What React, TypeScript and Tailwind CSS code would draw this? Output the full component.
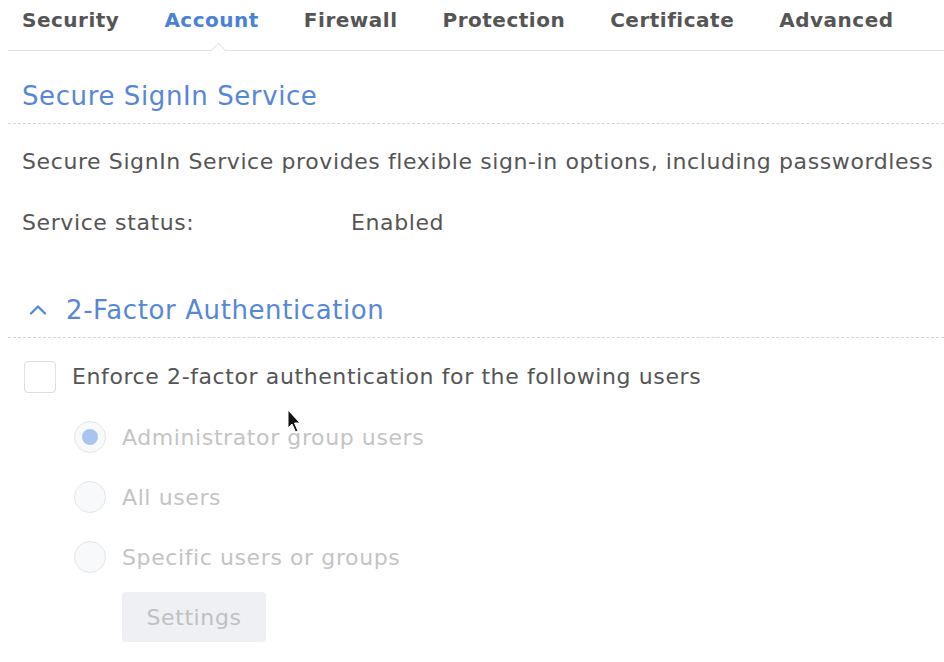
import { ChevronUp } from "lucide-react";

const tabs = ["Security", "Account", "Firewall", "Protection", "Certificate", "Advanced"];

const Radio = ({ checked, label }: { checked?: boolean; label: string }) => (
  <div className="flex items-center h-[60px]">
    <span className="w-[32px] h-[32px] rounded-full border border-[#e3e6ea] bg-[#f8f9fa] flex items-center justify-center">
      {checked && <span className="w-[16px] h-[16px] rounded-full bg-[#a9c4ee]" />}
    </span>
    <span className="ml-[16px] text-[22px] tracking-[0.6px] text-[#c4c4c4]">{label}</span>
  </div>
);

export default function App() {
  return (
    <div
      className="relative w-[944px] h-[662px] overflow-hidden bg-white pl-2"
      style={{ fontFamily: '"DejaVu Sans", Verdana, sans-serif' }}
    >
      {/* tab bar */}
      <div className="relative h-[51px] border-b border-[#e2e2e2]">
        <div className="flex items-center h-[40px] pl-[14px] gap-[45px] text-[20px] font-bold tracking-[0.5px] text-[#555]">
          {tabs.map((t) => (
            <span key={t} className={t === "Account" ? "text-[#4a82d8]" : ""}>
              {t}
            </span>
          ))}
        </div>
        <span className="absolute left-[205px] top-[45px] w-[11px] h-[11px] rotate-45 bg-white border-l border-t border-[#e2e2e2]" />
      </div>

      {/* Secure SignIn Service */}
      <div className="pt-[28px] pb-[10px] pl-[14px] text-[26px] tracking-[0.6px] text-[#5787d8] leading-[34px]">
        Secure SignIn Service
      </div>
      <div className="border-t border-dashed border-[#d6d6d6]" />
      <div className="pl-[14px] pt-[24px] text-[22px] tracking-[0.6px] text-[#555] whitespace-nowrap leading-[28px]">
        Secure SignIn Service provides flexible sign-in options, including passwordless
      </div>
      <div className="pl-[14px] pt-[33px] flex text-[22px] tracking-[0.6px] text-[#555] leading-[28px]">
        <span className="w-[329px]">Service status:</span>
        <span>Enabled</span>
      </div>

      {/* 2-Factor Authentication */}
      <div className="flex items-center pt-[56px] pb-[10px] pl-[16px] text-[26px] tracking-[0.6px] text-[#5787d8] leading-[34px]">
        <ChevronUp className="w-[28px] h-[28px] text-[#5787d8]" strokeWidth={2} />
        <span className="ml-[14px]">2-Factor Authentication</span>
      </div>
      <div className="border-t border-dashed border-[#d6d6d6]" />

      <div className="pl-[16px] pt-[22px] flex items-center">
        <span className="w-[32px] h-[32px] rounded-[4px] border border-[#dcdfe3] bg-white" />
        <span className="ml-[16px] text-[22px] tracking-[0.6px] text-[#555]">
          Enforce 2-factor authentication for the following users
        </span>
      </div>

      <div className="pl-[66px] pt-[14px]">
        <Radio checked label="Administrator group users" />
        <Radio label="All users" />
        <Radio label="Specific users or groups" />
        <div className="pl-[48px] pt-[5px]">
          <button className="w-[144px] h-[50px] rounded-[4px] bg-[#eef0f3] text-[22px] tracking-[0.6px] text-[#c0c0c0]">
            Settings
          </button>
        </div>
      </div>

      {/* mouse pointer */}
      <svg className="absolute left-[287px] top-[409px]" width="16" height="26" viewBox="0 0 16 26">
        <path d="M1 1 L1 19 L5 15 L8.5 23 L11 22 L7.5 14 L13 14 Z" fill="#111" stroke="#fff" strokeWidth="1" />
      </svg>
    </div>
  );
}
